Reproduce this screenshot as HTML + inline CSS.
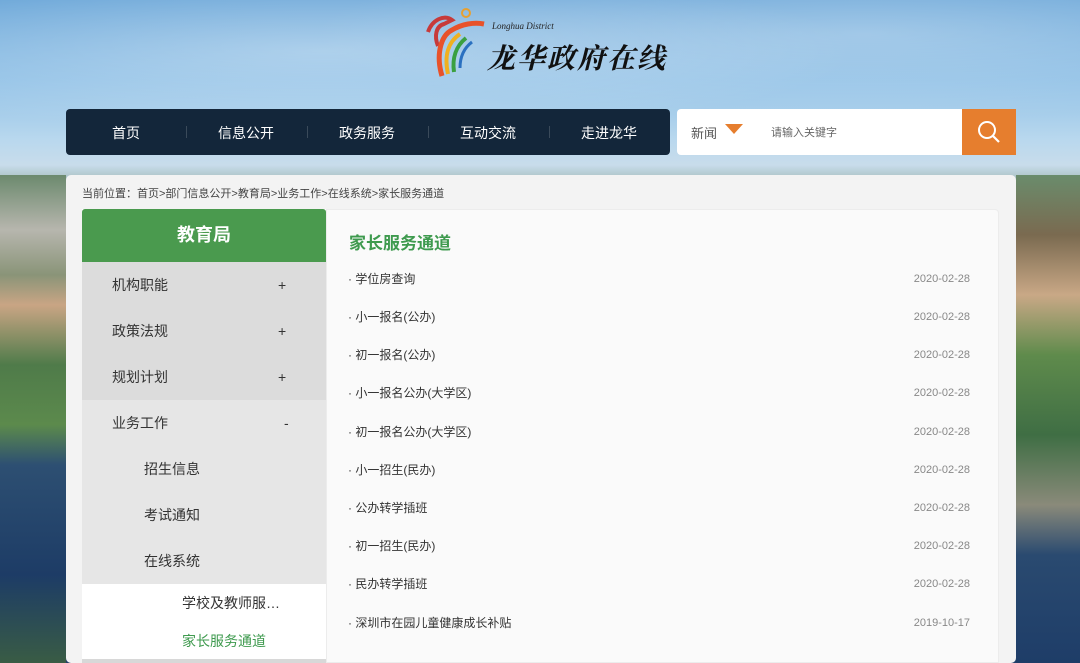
<!DOCTYPE html>
<html><head><meta charset="utf-8"><style>
*{margin:0;padding:0;box-sizing:border-box}
body{width:1080px;height:663px;overflow:hidden;position:relative;font-family:"Liberation Sans","Noto Sans CJK SC",sans-serif;
background:linear-gradient(180deg,#6aa6d8 0px,#8fc0e6 80px,#b9d8ee 140px,#c8dceb 165px,#7c9a88 200px,#5d7f5a 300px,#4c6e55 400px,#2b4a6a 460px,#21406a 663px);}
.a{position:absolute}
.sky{left:0;top:0;width:1080px;height:170px;background:radial-gradient(ellipse at 30% 30%,rgba(255,255,255,.35),transparent 50%),radial-gradient(ellipse at 80% 20%,rgba(255,255,255,.3),transparent 45%)}
.lside{left:0;top:175px;width:66px;height:488px;background:linear-gradient(180deg,#6c8a6e 0,#b7b6ae 55px,#8a9478 100px,#c9a584 130px,#4f7b4a 190px,#5c8a4c 250px,#2d4f72 290px,#1d3c66 400px,#3d6040 500px)}
.rside{left:1016px;top:175px;width:64px;height:488px;background:linear-gradient(180deg,#6a8c6c 0,#7a6a50 60px,#c9a886 120px,#5f8b4c 180px,#3f6e44 260px,#8a8a7a 330px,#2a4a70 380px,#1e3d68 488px)}
.nav{left:66px;top:109px;width:604px;height:46px;background:#13263a;border-radius:4px;color:#fff;font-size:14px}
.nav span{position:absolute;top:14px;width:120px;text-align:center}
.nav i{position:absolute;top:17px;width:1px;height:12px;background:#3a4a5a}
.search{left:677px;top:109px;width:285px;height:46px;background:#fff;border-radius:4px 0 0 4px}
.btn{left:962px;top:109px;width:54px;height:46px;background:#e67e2e}
.panel{left:66px;top:175px;width:950px;height:488px;background:#f3f3f3;border-radius:5px}
.crumb{left:82px;top:185px;font-size:11px;color:#444}
.side{left:82px;top:209px;width:244px;height:454px;background:#fff}
.sh{left:82px;top:209px;width:244px;height:53px;background:#4a9a4e;border-radius:3px 3px 0 0;color:#fff;font-size:18px;font-weight:bold;text-align:center;line-height:53px}
.m{position:absolute;left:82px;width:244px;height:46px;font-size:14px;color:#333;line-height:46px}
.content{left:326px;top:209px;width:673px;height:454px;background:#fafafa;border-radius:0 4px 0 0;border:1px solid #ececec}
.row{position:absolute;left:348px;width:622px;height:16px;line-height:16px;font-size:12px;color:#333;display:flex;justify-content:space-between;align-items:center}
.row b{font-weight:normal;color:#888;font-size:11px}
</style></head><body>
<div class="a sky"></div>
<div class="a lside"></div>
<div class="a rside"></div>
<svg class="a" style="left:422px;top:6px" width="70" height="74" viewBox="0 0 70 74">
<circle cx="44" cy="7" r="4" fill="none" stroke="#e8a030" stroke-width="2"/>
<path d="M6 26 C10 14 22 8 30 14 L22 18 C14 20 12 30 16 40" fill="none" stroke="#c73a3a" stroke-width="4"/>
<path d="M20 70 C14 50 18 30 30 24 C40 18 52 16 62 18" fill="none" stroke="#e8522a" stroke-width="5"/>
<path d="M26 68 C22 50 26 36 38 28" fill="none" stroke="#f0b020" stroke-width="4"/>
<path d="M32 66 C30 52 34 40 44 32" fill="none" stroke="#3aa040" stroke-width="4"/>
<path d="M38 62 C38 50 42 42 50 36" fill="none" stroke="#2a70c0" stroke-width="3"/>
</svg>
<div class="a" style="left:492px;top:21px;font-size:9px;font-style:italic;font-family:'Liberation Serif',serif;color:#222">Longhua District</div>
<div class="a" style="left:487px;top:37px;font-size:28px;font-weight:bold;font-style:italic;letter-spacing:2px;color:#111;font-family:'Noto Serif CJK SC',serif">龙华政府在线</div>

<div class="a nav">
<span style="left:0">首页</span><i style="left:120px"></i>
<span style="left:120px">信息公开</span><i style="left:241px"></i>
<span style="left:241px">政务服务</span><i style="left:362px"></i>
<span style="left:362px">互动交流</span><i style="left:483px"></i>
<span style="left:483px">走进龙华</span>
</div>
<div class="a search">
<span class="a" style="left:14px;top:14px;font-size:13px;color:#555">新闻</span>
<svg class="a" style="left:48px;top:15px" width="18" height="11"><path d="M0 0H18L9 10Z" fill="#e67e2e"/></svg>
<span class="a" style="left:94px;top:15px;font-size:11px;color:#666">请输入关键字</span>
</div>
<div class="a btn"><svg width="54" height="46"><circle cx="25" cy="21" r="8" fill="none" stroke="#fff" stroke-width="2"/><path d="M31 27L37 33" stroke="#fff" stroke-width="2.2"/></svg></div>

<div class="a panel"></div>
<div class="a crumb">当前位置：首页&gt;部门信息公开&gt;教育局&gt;业务工作&gt;在线系统&gt;家长服务通道</div>
<div class="a side"></div>
<div class="a sh">教育局</div>
<div class="m" style="top:262px;background:#dcdcdc"><span style="margin-left:30px">机构职能</span><span class="a" style="left:196px">+</span></div>
<div class="m" style="top:308px;background:#dcdcdc"><span style="margin-left:30px">政策法规</span><span class="a" style="left:196px">+</span></div>
<div class="m" style="top:354px;background:#dcdcdc"><span style="margin-left:30px">规划计划</span><span class="a" style="left:196px">+</span></div>
<div class="m" style="top:400px;background:#e6e6e6"><span style="margin-left:30px">业务工作</span><span class="a" style="left:202px">-</span></div>
<div class="m" style="top:446px;background:#e6e6e6"><span style="margin-left:62px">招生信息</span></div>
<div class="m" style="top:492px;background:#e6e6e6"><span style="margin-left:62px">考试通知</span></div>
<div class="m" style="top:538px;background:#e6e6e6"><span style="margin-left:62px">在线系统</span></div>
<div class="m" style="top:584px;height:38px;line-height:38px;background:#fff"><span style="margin-left:100px">学校及教师服…</span></div>
<div class="m" style="top:622px;height:38px;line-height:38px;background:#fff;color:#3e9a4e"><span style="margin-left:100px">家长服务通道</span></div>
<div class="a" style="left:82px;top:659px;width:244px;height:4px;background:#d8d8d8"></div>

<div class="a content"></div>
<div class="a" style="left:349px;top:229px;font-size:17px;color:#3e9a4e;font-weight:bold">家长服务通道</div>
<div class="row" style="top:271px"><span>· 学位房查询</span><b>2020-02-28</b></div>
<div class="row" style="top:309px"><span>· 小一报名(公办)</span><b>2020-02-28</b></div>
<div class="row" style="top:347px"><span>· 初一报名(公办)</span><b>2020-02-28</b></div>
<div class="row" style="top:385px"><span>· 小一报名公办(大学区)</span><b>2020-02-28</b></div>
<div class="row" style="top:424px"><span>· 初一报名公办(大学区)</span><b>2020-02-28</b></div>
<div class="row" style="top:462px"><span>· 小一招生(民办)</span><b>2020-02-28</b></div>
<div class="row" style="top:500px"><span>· 公办转学插班</span><b>2020-02-28</b></div>
<div class="row" style="top:538px"><span>· 初一招生(民办)</span><b>2020-02-28</b></div>
<div class="row" style="top:576px"><span>· 民办转学插班</span><b>2020-02-28</b></div>
<div class="row" style="top:615px"><span>· 深圳市在园儿童健康成长补贴</span><b>2019-10-17</b></div>
</body></html>
